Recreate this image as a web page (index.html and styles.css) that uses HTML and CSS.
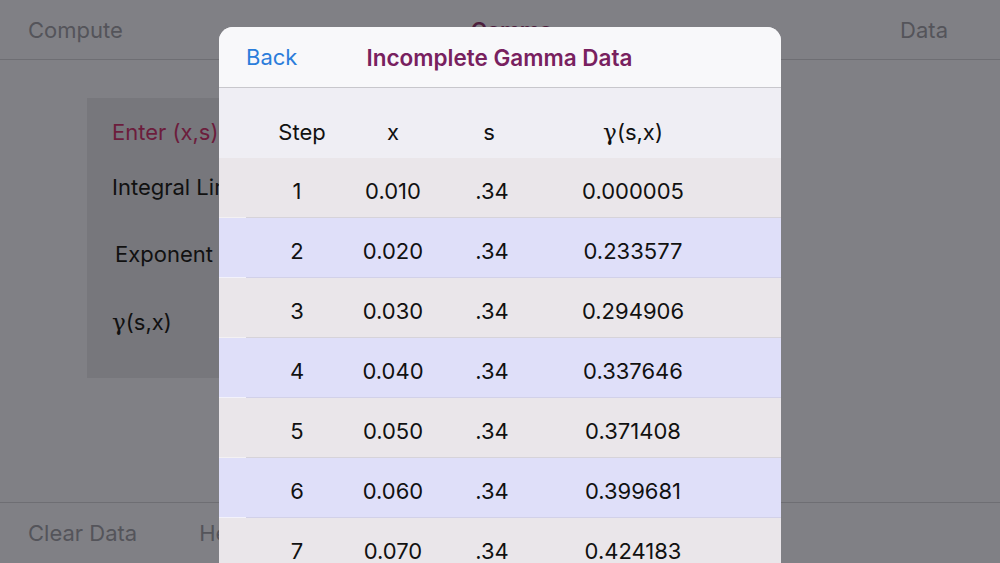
FILE: index.html
```html
<!DOCTYPE html>
<html>
<head>
<meta charset="utf-8">
<link rel="stylesheet" href="styles.css">
</head>
<body>
<div class="screen">
  <header class="nav">
    <span class="nav-btn">Compute</span>
    <span class="nav-title">Gamma</span>
    <span class="nav-btn">Data</span>
  </header>
  <main class="content">
    <div class="panel">
      <div class="p-line p-enter">Enter (x,s)</div>
      <div class="p-line p-int">Integral Limit</div>
      <div class="p-line p-exp">Exponent</div>
      <div class="p-line p-gam"><span class="gamma">γ</span>(s,x)</div>
    </div>
  </main>
  <footer class="toolbar">
    <span class="tool-btn">Clear Data</span>
    <span class="tool-btn">Help</span>
  </footer>
</div>

<div class="modal">
  <div class="modal-head">
    <span class="back">Back</span>
    <span class="modal-title">Incomplete Gamma Data</span>
    <span></span>
  </div>
  <div class="thead">
    <span>Step</span><span>x</span><span>s</span><span><span class="gamma">γ</span>(s,x)</span>
  </div>
  <div class="row odd"><span class="st">1</span><span>0.010</span><span class="sv">.34</span><span>0.000005</span></div>
  <div class="row even"><span class="st">2</span><span>0.020</span><span class="sv">.34</span><span>0.233577</span></div>
  <div class="row odd"><span class="st">3</span><span>0.030</span><span class="sv">.34</span><span>0.294906</span></div>
  <div class="row even"><span class="st">4</span><span>0.040</span><span class="sv">.34</span><span>0.337646</span></div>
  <div class="row odd"><span class="st">5</span><span>0.050</span><span class="sv">.34</span><span>0.371408</span></div>
  <div class="row even"><span class="st">6</span><span>0.060</span><span class="sv">.34</span><span>0.399681</span></div>
  <div class="row odd"><span class="st">7</span><span>0.070</span><span class="sv">.34</span><span>0.424183</span></div>
</div>
</body>
</html>
```

FILE: styles.css
```css
html, body {
  margin: 0;
  padding: 0;
}
body {
  width: 1000px;
  height: 563px;
  overflow: hidden;
  background: #808085;
  font-family: "Inter", "Liberation Sans", sans-serif;
  font-size: 22px;
  color: #111;
  position: relative;
}
.screen {
  display: flex;
  flex-direction: column;
  height: 563px;
}
.nav {
  height: 59px;
  border-bottom: 1px solid #6e6e73;
  display: flex;
  align-items: center;
  justify-content: space-between;
  padding: 0 52px 0 28px;
  box-sizing: content-box;
}
.nav-btn {
  color: #54545a;
}
.nav-title {
  color: #4c1f3d;
  font-weight: 600;
}
.content {
  flex: 1;
}
.panel {
  margin: 38px 0 0 87px;
  width: 560px;
  height: 280px;
  background: #77777c;
  box-sizing: border-box;
  padding: 22px 0 0 25px;
}
.p-line {
  line-height: 24px;
  color: #111;
}
.p-enter { color: #6c1d3c; }
.p-int { margin-top: 31px; }
.p-exp { margin-top: 43px; margin-left: 3px; }
.p-gam { margin-top: 44px; }
.gamma {
  font-family: "DejaVu Serif", "Liberation Serif", serif;
  font-size: 1.05em;
}
.toolbar {
  height: 60px;
  border-top: 1px solid #6e6e73;
  display: flex;
  align-items: center;
  gap: 62px;
  padding-left: 28px;
}
.tool-btn {
  color: #54545a;
}

.modal {
  position: absolute;
  left: 219px;
  top: 27px;
  width: 562px;
  height: 536px;
  border-radius: 14px 14px 0 0;
  overflow: hidden;
  background: #efeef4;
}
.modal-head {
  height: 60px;
  border-bottom: 1px solid #c8c7cc;
  background: #f8f8fa;
  display: grid;
  grid-template-columns: 1fr auto 1fr;
  align-items: center;
  padding: 0 28px 0 27px;
}
.back {
  color: #2b7ddb;
}
.modal-title {
  color: #78215f;
  font-weight: 600;
  font-size: 22.5px;
}
.thead, .row {
  display: grid;
  grid-template-columns: 94px 88px 104px 184px;
  padding-left: 36px;
  line-height: 24px;
  text-align: center;
}
.thead {
  height: 70px;
  box-sizing: border-box;
  padding-top: 32px;
}
.row {
  height: 60px;
  box-sizing: border-box;
  padding-top: 21px;
}
.row .st {
  padding-right: 10px;
}
.row .sv {
  padding-left: 6px;
}
.odd {
  background: linear-gradient(to right, #f3f1f3 27px, #d6d3da 27px) bottom / 100% 1px no-repeat, #eae6ea;
}
.even {
  background: linear-gradient(to right, #f3f2fb 27px, #d2d1e8 27px) bottom / 100% 1px no-repeat, #dfdff9;
}
```
